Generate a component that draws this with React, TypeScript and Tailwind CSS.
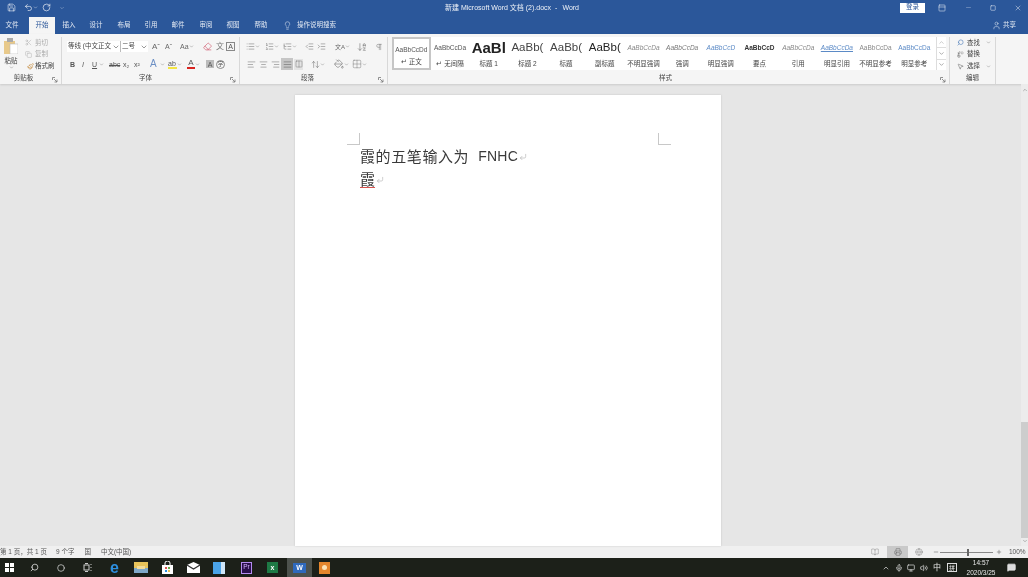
import React from "react";
import { Save, Undo2, RotateCw, ChevronDown, ChevronUp, Lightbulb, User, Search, Scissors, Copy, Paintbrush, AlignLeft, AlignCenter, AlignRight, AlignJustify, List, ListOrdered, ListTree, Indent, Outdent, ArrowDownAZ, Pilcrow, Grid2x2, PaintBucket, ArrowUpDown, MousePointer2, Replace, Minus, Plus, BookOpen, Printer, Globe, Circle, Mic, Monitor, Volume2, MessageSquare, X, Square, Columns2, Eraser, CornerDownLeft, PanelTop } from "lucide-react";

const FONT = { fontFamily: '"Liberation Sans","Noto Sans CJK SC",sans-serif' };

const Launcher = () => (
  <svg width="6" height="6" viewBox="0 0 6 6" className="absolute right-[3px] bottom-[1px] text-[#777]" fill="none" stroke="currentColor" strokeWidth="0.8">
    <path d="M0.5 3V0.5H3M2 2l3 3M5 2.5V5H2.5" />
  </svg>
);

const Tiny = ({ children, c = "" }: { children: React.ReactNode; c?: string }) => <span className={`whitespace-nowrap text-[6.5px] leading-none text-[#444] ${c}`}>{children}</span>;

const Drop = () => <ChevronDown size={5} strokeWidth={2} className="shrink-0 text-[#777]" />;

const Label = ({ children, c = "" }: { children: React.ReactNode; c?: string }) => (
  <div className={`flex h-[12px] items-center justify-center ${c}`}><Tiny>{children}</Tiny></div>
);

const tabs: [string, string][] = [
  ["文件", "w-[24px] mr-[5px]"], ["开始", "w-[26px]"], ["插入", "w-[28px]"], ["设计", "w-[26px]"], ["布局", "w-[30px]"], ["引用", "w-[24px]"], ["邮件", "w-[30px]"], ["审阅", "w-[26px]"], ["视图", "w-[28px]"], ["帮助", "w-[28px]"],
];

const styles: { s: string; l: string; c: string }[] = [
  { s: "AaBbCcDd", l: "↵ 正文", c: "text-[6.5px] text-[#555]" },
  { s: "AaBbCcDa", l: "↵ 无间隔", c: "text-[6.5px] text-[#555]" },
  { s: "AaBl", l: "标题 1", c: "text-[15px] font-bold text-[#222] leading-none" },
  { s: "AaBb(", l: "标题 2", c: "text-[11.5px] text-[#444] leading-none" },
  { s: "AaBb(", l: "标题", c: "text-[11.5px] text-[#444] leading-none" },
  { s: "AaBb(", l: "副标题", c: "text-[11.5px] text-[#222] leading-none" },
  { s: "AaBbCcDa", l: "不明显强调", c: "text-[6.5px] italic text-[#888]" },
  { s: "AaBbCcDa", l: "强调", c: "text-[6.5px] italic text-[#777]" },
  { s: "AaBbCcD", l: "明显强调", c: "text-[6.5px] italic text-[#5b8ac6]" },
  { s: "AaBbCcD", l: "要点", c: "text-[6.5px] font-bold text-[#333]" },
  { s: "AaBbCcDa", l: "引用", c: "text-[6.5px] italic text-[#888]" },
  { s: "AaBbCcDa", l: "明显引用", c: "text-[6.5px] italic text-[#5b8ac6] underline" },
  { s: "AaBbCcDa", l: "不明显参考", c: "text-[6.5px] text-[#888]" },
  { s: "AaBbCcDa", l: "明显参考", c: "text-[6.5px] text-[#5b8ac6]" },
];

const I = ({ children, c = "" }: { children: React.ReactNode; c?: string }) => <span className={`flex shrink-0 items-center text-[#666] ${c}`}>{children}</span>;

export default function App() {
  return (
    <div style={FONT} className="flex h-[577px] w-[1028px] flex-col overflow-hidden bg-[#e6e6e6] blur-[0.35px]">
      {/* title bar */}
      <div className="flex h-[15px] shrink-0 items-center bg-[#2b579a] text-[#eef2f8]">
        <div className="flex w-[445px] items-center pl-[7px]">
          <Save size={9} strokeWidth={1.6} />
          <span className="ml-[8px] flex items-center"><Undo2 size={9} strokeWidth={1.8} /><ChevronDown size={5} /></span>
          <RotateCw size={9} strokeWidth={1.8} className="ml-[4px]" />
          <ChevronDown size={6} className="ml-[8px] opacity-60" />
        </div>
        <span className="flex flex-1 items-center whitespace-nowrap text-[7px] leading-none">新建 Microsoft Word 文档 (2).docx<span className="ml-[4px]">-</span><span className="ml-[5px]">Word</span></span>
        <span className="mr-[13px] flex h-[10px] w-[25px] items-center justify-center bg-white text-[6.5px] leading-none text-[#2b579a]">登录</span>
        <PanelTop size={8} strokeWidth={1.6} className="mr-[19px]" />
        <Minus size={7} className="mr-[18px] opacity-50" />
        <Square size={6} className="mr-[18px]" />
        <X size={8} className="mr-[6px] opacity-70" />
      </div>
      {/* tabs */}
      <div className="flex h-[19px] shrink-0 items-start bg-[#2b579a] text-[6.5px] leading-none text-[#e3e9f3]">
        {tabs.map(([t, w]) => (
          <span key={t} className={`flex h-[19px] items-center justify-center pt-px ${w} ${t === "开始" ? "bg-[linear-gradient(#2b579a_2px,#f5f5f5_2px)] text-[#2b579a]" : ""}`}>{t}</span>
        ))}
        <span className="ml-[8px] flex h-[19px] items-center gap-[5px] pt-px"><Lightbulb size={9} strokeWidth={1.4} />操作说明搜索</span>
        <span className="ml-auto mr-[12px] flex h-[19px] items-center gap-[2px] pt-px"><User size={9} strokeWidth={1.4} />共享</span>
      </div>
      {/* ribbon */}
      <div className="flex h-[50px] shrink-0 bg-[#f5f5f5] pt-[3px] shadow-[0_1px_2px_rgba(0,0,0,0.12)]">
        {/* clipboard */}
        <div className="relative flex w-[62px] shrink-0 flex-col border-r border-[#d8d8d8]">
          <div className="flex h-[35px]">
            <div className="flex w-[22px] flex-col items-center pt-[1px]">
              <svg width="14" height="16" viewBox="0 0 14 16"><rect x="0" y="3" width="11" height="13" fill="#e8c98a" /><rect x="3" y="0" width="6" height="4" fill="#a9a9a9" /><rect x="6" y="6" width="8" height="10" fill="#fff" stroke="#bbb" strokeWidth=".6" /></svg>
              <Tiny c="mt-[4px]">粘贴</Tiny>
              <Drop />
            </div>
            <div className="flex flex-col pl-[3px]">
              <span className="flex h-[12px] items-center gap-[3px]"><Scissors size={7} className="text-[#bbb]" /><Tiny c="text-[#aaa]">剪切</Tiny></span>
              <span className="flex h-[12px] items-center gap-[3px]"><Copy size={7} className="text-[#bbb]" /><Tiny c="text-[#aaa]">复制</Tiny></span>
              <span className="flex h-[12px] items-center gap-[1px] pl-[2px]"><Paintbrush size={7} className="text-[#c58a3c]" /><Tiny>格式刷</Tiny></span>
            </div>
          </div>
          <Label c="pr-[14px]">剪贴板</Label>
          <Launcher />
        </div>
        {/* font */}
        <div className="relative flex w-[178px] shrink-0 flex-col border-r border-[#d8d8d8] pl-[5px]">
          <div className="flex h-[19px] items-center">
            <span className="flex h-[11px] w-[53px] shrink-0 items-center justify-between bg-white"><Tiny c="pl-[1px] text-[#333]">等线 (中文正文</Tiny><ChevronDown size={8} className="text-[#666]" /></span>
            <span className="flex h-[11px] w-[28px] shrink-0 items-center justify-between border-l border-[#bbb] bg-white"><Tiny c="pl-[1px] text-[#333]">二号</Tiny><ChevronDown size={8} className="text-[#666]" /></span>
            <span className="ml-[4px] w-[8px] shrink-0 text-[8px] leading-none text-[#666]">Aˆ</span>
            <span className="ml-[5px] w-[7px] shrink-0 text-[7px] leading-none text-[#666]">Aˇ</span>
            <span className="ml-[8px] flex w-[15px] shrink-0 items-center text-[7px] leading-none text-[#666]">Aa<Drop /></span>
            <Eraser size={9} className="ml-[8px] shrink-0 text-[#d46a7c]" />
            <span className="ml-[4px] w-[8px] shrink-0 text-[8px] leading-none text-[#777]">文</span>
            <span className="ml-[2px] flex h-[9px] w-[9px] shrink-0 items-center justify-center border border-[#888] text-[7px] leading-none text-[#555]">A</span>
          </div>
          <div className="flex h-[16px] items-center text-[7px] leading-none text-[#555]">
            <b className="ml-[3px] w-[6px] shrink-0">B</b>
            <i className="ml-[6px] w-[5px] shrink-0">I</i>
            <span className="ml-[5px] flex w-[13px] shrink-0 items-center underline">U<span className="ml-[2px]"><Drop /></span></span>
            <span className="ml-[4px] w-[11px] shrink-0 line-through">abc</span>
            <span className="ml-[3px] w-[6px] shrink-0">x₂</span>
            <span className="ml-[5px] w-[6px] shrink-0">x²</span>
            <span className="ml-[10px] flex w-[15px] shrink-0 items-center text-[10px] text-[#6c8fc4]"><span className="w-[10px]">A</span><Drop /></span>
            <span className="ml-[3px] flex w-[14px] shrink-0 items-center"><span className="w-[9px] border-b-2 border-[#f4e542]">ab</span><Drop /></span>
            <span className="ml-[5px] flex w-[13px] shrink-0 items-center"><span className="w-[8px] border-b-2 border-[#d8241f] text-center text-[8px]">A</span><Drop /></span>
            <span className="ml-[6px] flex h-[8px] w-[8px] shrink-0 items-center justify-center bg-[#bbb]">A</span>
            <span className="ml-[2px] flex h-[9px] w-[9px] shrink-0 items-center justify-center rounded-full border border-[#888] text-[6px]">字</span>
          </div>
          <Label c="pr-[15px]">字体</Label>
          <Launcher />
        </div>
        {/* paragraph */}
        <div className="relative flex w-[148px] shrink-0 flex-col border-r border-[#d8d8d8]">
          <div className="flex h-[19px] items-center pl-[6px]">
            <I c="w-[14px]"><List size={9} strokeWidth={1.3} /><Drop /></I>
            <I c="ml-[5px] w-[14px]"><ListOrdered size={9} strokeWidth={1.3} /><Drop /></I>
            <I c="ml-[4px] w-[14px]"><ListTree size={9} strokeWidth={1.3} /><Drop /></I>
            <I c="ml-[8px] w-[9px]"><Outdent size={9} strokeWidth={1.3} /></I>
            <I c="ml-[3px] w-[9px]"><Indent size={9} strokeWidth={1.3} /></I>
            <I c="ml-[9px] w-[15px]"><span className="w-[10px] text-[6px] leading-none">文A</span><Drop /></I>
            <I c="ml-[7px] w-[10px]"><ArrowDownAZ size={10} strokeWidth={1.3} /></I>
            <I c="ml-[8px]"><Pilcrow size={8} strokeWidth={1.3} /></I>
          </div>
          <div className="flex h-[16px] items-center pl-[7px]">
            <I c="w-[9px]"><AlignLeft size={9} strokeWidth={1.3} /></I>
            <I c="ml-[3px] w-[9px]"><AlignCenter size={9} strokeWidth={1.3} /></I>
            <I c="ml-[3px] w-[9px]"><AlignRight size={9} strokeWidth={1.3} /></I>
            <span className="ml-[1px] flex h-[12px] w-[12px] shrink-0 items-center justify-center bg-[#c6c6c6]"><AlignJustify size={9} strokeWidth={1.3} className="text-[#555]" /></span>
            <span className="ml-[1px] flex h-[11px] w-[9px] shrink-0 items-center justify-center bg-[#e4e4e4]"><Columns2 size={8} strokeWidth={1.3} className="text-[#666]" /></span>
            <I c="ml-[8px] w-[14px]"><ArrowUpDown size={9} strokeWidth={1.3} /><Drop /></I>
            <I c="ml-[9px] w-[15px]"><PaintBucket size={10} strokeWidth={1.3} /><Drop /></I>
            <I c="ml-[3px] w-[15px]"><Grid2x2 size={10} strokeWidth={1} /><Drop /></I>
          </div>
          <Label c="pr-[12px]">段落</Label>
          <Launcher />
        </div>
        {/* styles */}
        <div className="relative flex w-[562px] shrink-0 flex-col border-r border-[#d8d8d8] pl-[4px]">
          <div className="h-[35px]">
            <div className="flex h-[33px] w-[554px] items-stretch bg-white">
              {styles.map((s, i) => (
                <div key={i} className={`flex w-[38.7px] shrink-0 flex-col items-center justify-between overflow-hidden pb-[3px] pt-[5px] ${i === 0 ? "border-2 border-[#c6c6c6]" : ""}`}>
                  <span className={`flex h-[11px] items-center whitespace-nowrap ${s.c}`}>{s.s}</span>
                  <Tiny c={i === 0 ? "text-[#444]" : ""}>{s.l}</Tiny>
                </div>
              ))}
              <div className="ml-auto flex w-[10px] flex-col border-l border-[#ddd]">
                <span className="flex flex-1 items-center justify-center border-b border-[#ddd]"><ChevronUp size={7} className="text-[#aaa]" /></span>
                <span className="flex flex-1 items-center justify-center border-b border-[#ddd]"><ChevronDown size={7} className="text-[#777]" /></span>
                <span className="flex flex-1 items-center justify-center"><ChevronDown size={7} className="text-[#777]" /></span>
              </div>
            </div>
          </div>
          <Label c="pr-[10px]">样式</Label>
          <Launcher />
        </div>
        {/* editing */}
        <div className="flex w-[46px] shrink-0 flex-col border-r border-[#d8d8d8] pl-[7px]">
          <div className="flex h-[35px] flex-col">
            <span className="flex h-[12px] items-center gap-[3px]"><Search size={7} className="text-[#4a7ab8]" style={{ transform: "scaleX(-1)" }} /><Tiny>查找</Tiny><span className="ml-[3px]"><Drop /></span></span>
            <span className="flex h-[12px] items-center gap-[3px]"><Replace size={7} className="text-[#666]" /><Tiny>替换</Tiny></span>
            <span className="flex h-[12px] items-center gap-[3px]"><MousePointer2 size={7} className="text-[#777]" /><Tiny>选择</Tiny><span className="ml-[3px]"><Drop /></span></span>
          </div>
          <Label c="pr-[7px]">编辑</Label>
        </div>
      </div>
      {/* doc area */}
      <div className="flex min-h-0 flex-1">
        <div className="flex flex-1 justify-center pt-[11px] pr-[5px]">
          <div className="relative h-full w-[426px] bg-white pl-[65px] pt-[50px] shadow-[0_0_2px_rgba(0,0,0,0.15)]">
            <span className="absolute left-[52px] top-[38px] h-[12px] w-[13px] border-b border-r border-[#c8c8c8]" />
            <span className="absolute left-[363px] top-[38px] h-[12px] w-[13px] border-b border-l border-[#c8c8c8]" />
            <p className="flex h-[23px] items-center whitespace-nowrap text-[15px] leading-[23px] tracking-[0.6px] text-[#3a3a3a]">霞的五笔输入为<span className="ml-[9px] text-[14px] tracking-[0.25px]">FNHC</span><CornerDownLeft size={8} className="ml-[1px] text-[#b5b5b5]" /></p>
            <p className="flex h-[23px] items-center whitespace-nowrap text-[15px] leading-[23px] text-[#3a3a3a]"><span className="underline decoration-[#d9534f] decoration-1 underline-offset-2">霞</span><CornerDownLeft size={8} className="ml-[1px] text-[#b5b5b5]" /></p>
          </div>
        </div>
        <div className="flex w-[7px] shrink-0 flex-col items-center justify-between bg-[#ececec] pb-[2px] pt-[3px]">
          <ChevronUp size={6} className="text-[#777]" />
          <div className="mt-auto h-[116px] w-full bg-[#cdcdcd]" />
          <ChevronDown size={6} className="text-[#777]" />
        </div>
      </div>
      {/* status bar */}
      <div className="flex h-[12px] shrink-0 items-center bg-[#f0f0f0] text-[6.5px] leading-none text-[#555]">
        <span>第 1 页，共 1 页</span>
        <span className="ml-[9px]">9 个字</span>
        <span className="ml-[10px]">国</span>
        <span className="ml-[10px]">中文(中国)</span>
        <BookOpen size={8} className="ml-auto text-[#777]" strokeWidth={1.3} />
        <span className="ml-[8px] flex h-[12px] w-[21px] items-center justify-center bg-[#c9c9c9]"><Printer size={8} strokeWidth={1.3} /></span>
        <Globe size={8} className="ml-[7px] text-[#777]" strokeWidth={1.3} />
        <Minus size={6} className="ml-[10px]" />
        <span className="relative ml-[1px] h-px w-[53px] bg-[#888]"><span className="absolute left-[27px] top-[-3px] h-[7px] w-[2px] bg-[#666]" /></span>
        <Plus size={6} className="ml-[3px]" />
        <span className="ml-[7px] mr-[2px] w-[17px]">100%</span>
      </div>
      {/* taskbar */}
      <div className="flex h-[19px] shrink-0 items-center bg-[#1c2019] text-[#e8e8e8]">
        <svg width="9" height="9" viewBox="0 0 9 9" fill="#fff" className="ml-[5px]"><rect width="4" height="4" /><rect x="5" width="4" height="4" /><rect y="5" width="4" height="4" /><rect x="5" y="5" width="4" height="4" /></svg>
        <Search size={9} className="ml-[16px]" style={{ transform: "scaleX(-1)" }} />
        <Circle size={8} strokeWidth={2} className="ml-[18px]" />
        <svg width="9" height="9" viewBox="0 0 9 9" className="ml-[18px]" fill="none" stroke="#ccc" strokeWidth="1"><rect x="1" y="2" width="5" height="5" /><path d="M8 1v1M8 4v1M8 7v1M2 0.5h3M2 8.5h3" /></svg>
        <span className="ml-[17px] w-[11px] text-center text-[16px] font-bold leading-none text-[#2d8fe0]">e</span>
        <svg width="14" height="11" viewBox="0 0 14 11" className="ml-[14px]"><rect width="14" height="11" fill="#e8c35a" /><rect y="6" width="14" height="5" fill="#7fa8c9" /><rect x="3" y="4" width="8" height="3" fill="#f3dc9a" /></svg>
        <svg width="13" height="13" viewBox="0 0 13 13" className="ml-[13px]"><path d="M1 4h11v9H1z" fill="#fff" /><path d="M4 4V2a2.5 2 0 0 1 5 0v2" fill="none" stroke="#fff" strokeWidth="1" /><rect x="4" y="6" width="2" height="2" fill="#d9534f" /><rect x="7" y="6" width="2" height="2" fill="#6ab04c" /><rect x="4" y="9" width="2" height="2" fill="#2d8fe0" /><rect x="7" y="9" width="2" height="2" fill="#e8c35a" /></svg>
        <svg width="13" height="11" viewBox="0 0 13 11" className="ml-[13px]"><path d="M0 3l6.5-3L13 3v8H0z" fill="#fff" /><path d="M0 3l6.5 4L13 3" fill="none" stroke="#333" strokeWidth="1.2" /></svg>
        <span className="ml-[13px] block h-[12px] w-[12px] bg-[linear-gradient(90deg,#4aa3e8_70%,#cfe6f8_70%)]" />
        <span className="ml-[16px] flex h-[12px] w-[11px] items-center justify-center border border-[#b48cf0] bg-[#2a0f4d] text-[6.5px] leading-none text-[#d6b6ff]">Pr</span>
        <span className="ml-[15px] flex h-[11px] w-[11px] items-center justify-center bg-[#1e7a45] text-[7px] font-bold leading-none text-white">x</span>
        <span className="ml-[9px] flex h-[19px] w-[25px] items-center justify-center bg-[#4d524d]"><span className="flex h-[10px] w-[13px] items-center justify-center bg-[#2f69bc] text-[7px] font-bold leading-none text-white">W</span></span>
        <span className="ml-[7px] flex h-[12px] w-[11px] items-center justify-center bg-[#e5862c]"><span className="block h-[5px] w-[5px] rounded-full bg-[#fde3b5]" /></span>
        <ChevronUp size={8} className="ml-auto" />
        <Mic size={8} className="ml-[5px]" />
        <Monitor size={8} className="ml-[4px]" />
        <Volume2 size={8} className="ml-[5px]" />
        <span className="ml-[5px] w-[8px] text-[8px] leading-none">中</span>
        <span className="ml-[6px] flex h-[9px] w-[10px] items-center justify-center border border-[#ddd] text-[6px] leading-none">拼</span>
        <div className="ml-[2px] flex w-[44px] flex-col items-center pt-px text-[6.5px] leading-[10px]"><span>14:57</span><span>2020/3/25</span></div>
        <MessageSquare size={9} fill="#ddd" className="ml-[4px] mr-[12px]" />
      </div>
    </div>
  );
}
